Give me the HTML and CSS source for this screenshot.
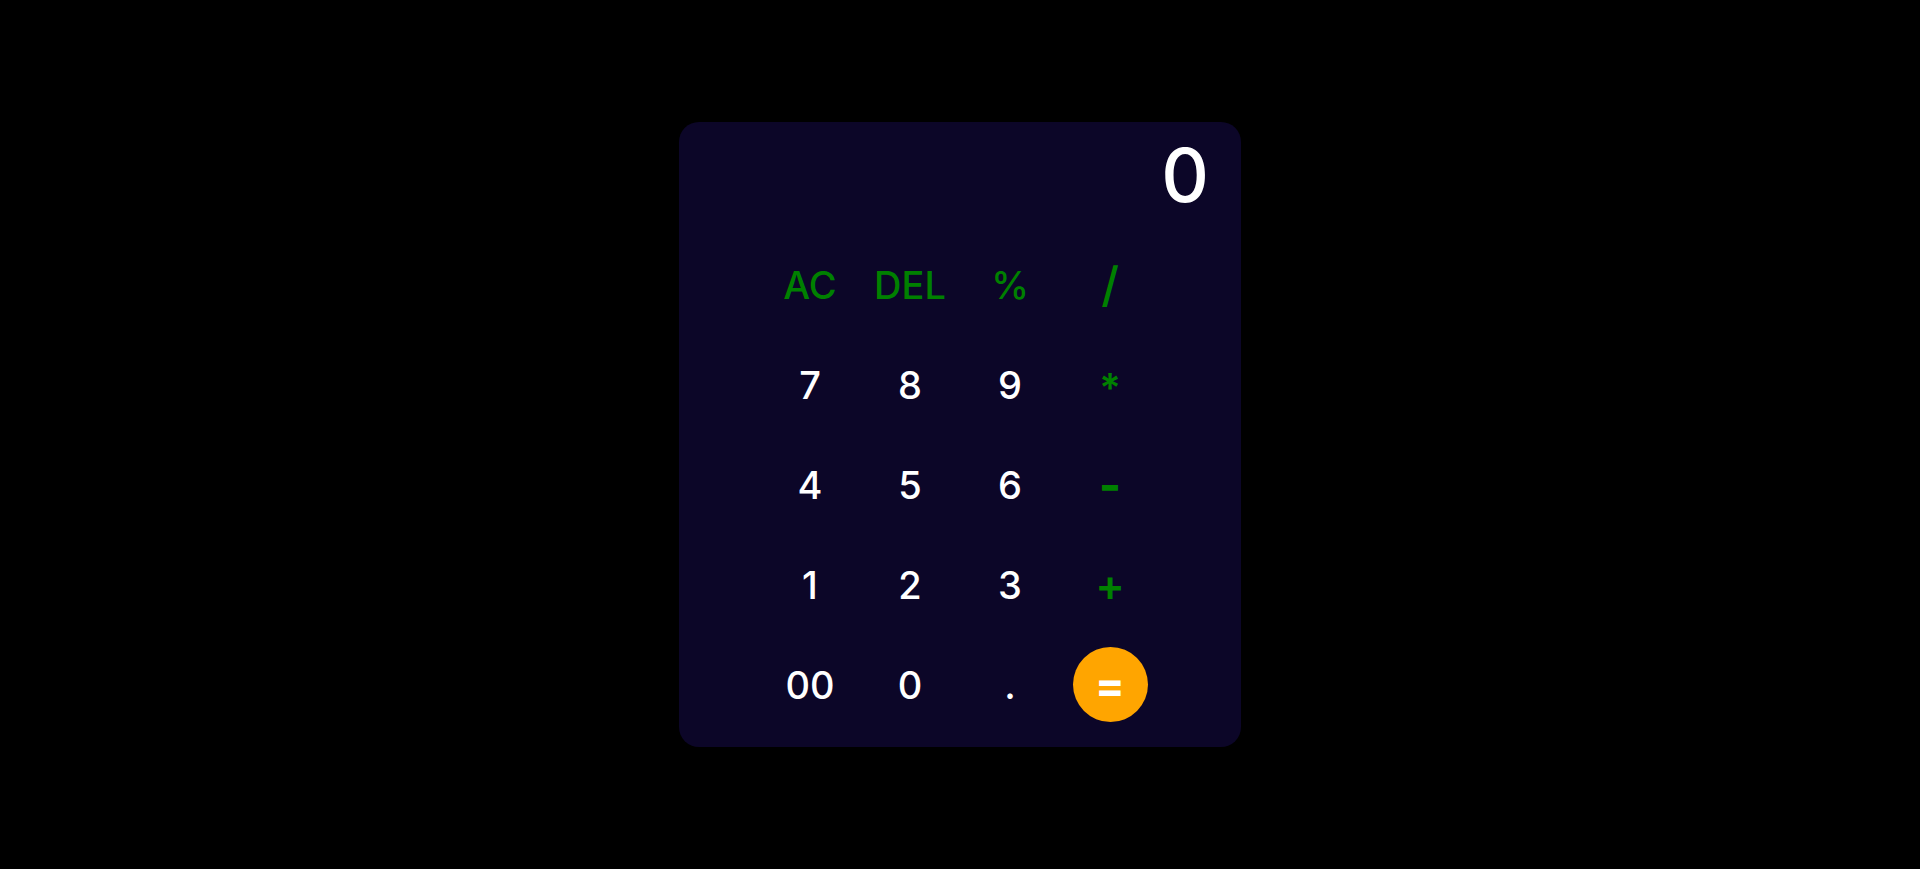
FILE: index.html
```html
<!DOCTYPE html>
<html lang="en">
<head>
<meta charset="UTF-8">
<title>Calculator</title>
<link rel="stylesheet" href="styles.css">
</head>
<body>
<div class="calculator">
  <div class="display">0</div>
  <div class="keys">
    <button class="key op">AC</button>
    <button class="key op">DEL</button>
    <button class="key op">%</button>
    <button class="key op slash">/</button>
    <button class="key">7</button>
    <button class="key">8</button>
    <button class="key">9</button>
    <button class="key op star">*</button>
    <button class="key">4</button>
    <button class="key">5</button>
    <button class="key">6</button>
    <button class="key op minus">-</button>
    <button class="key">1</button>
    <button class="key">2</button>
    <button class="key">3</button>
    <button class="key op plus">+</button>
    <button class="key">00</button>
    <button class="key">0</button>
    <button class="key">.</button>
    <button class="key equal">=</button>
  </div>
</div>
</body>
</html>
```
FILE: styles.css
```css
* { box-sizing: border-box; }
html, body { margin: 0; padding: 0; }
body {
  background: #000;
  min-height: 100vh;
  display: flex;
  align-items: center;
  justify-content: center;
  font-family: "Inter", "Open Sans", sans-serif;
}
.calculator {
  width: 562px;
  height: 625px;
  background: #0c0628;
  border-radius: 20px;
  padding: 16px 32px 25px 25px;
  display: flex;
  flex-direction: column;
}
.display {
  height: 109px;
  color: #fff;
  font-size: 74px;
  font-weight: 500;
  line-height: 74px;
  text-align: right;
}
.keys {
  display: grid;
  grid-template-columns: repeat(4, 75px);
  grid-auto-rows: 75px;
  gap: 25px;
  justify-content: center;
  margin-right: -7px;
}
.key {
  width: 75px;
  height: 75px;
  border: none;
  border-radius: 50%;
  background: transparent;
  color: #fff;
  font-family: inherit;
  font-size: 38px;
  font-weight: 500;
  display: flex;
  align-items: center;
  justify-content: center;
  padding: 0;
  cursor: pointer;
}
.key.op { color: #008000; }
.key.slash { font-size: 48px; }
.key.star { align-items: flex-start; padding-top: 16px; font-size: 40px; font-weight: 600; }
.key.minus { font-size: 48px; font-weight: 700; }
.key.plus { font-size: 44px; font-weight: 600; }
.key.equal { background: #ffa500; color: #fff; font-size: 44px; font-weight: 700; }
```
